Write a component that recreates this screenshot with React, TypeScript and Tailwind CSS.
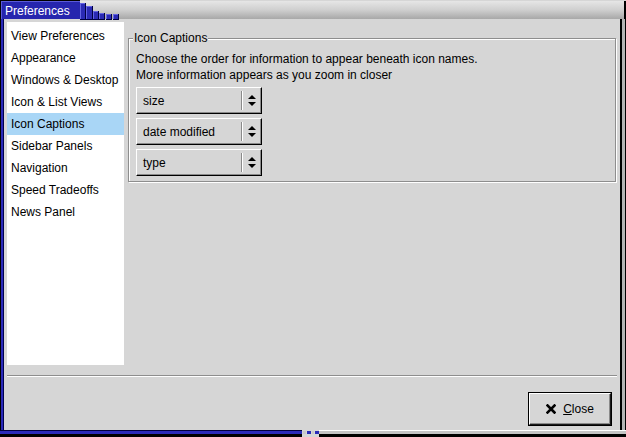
import React from "react";

const items = [
  "View Preferences",
  "Appearance",
  "Windows & Desktop",
  "Icon & List Views",
  "Icon Captions",
  "Sidebar Panels",
  "Navigation",
  "Speed Tradeoffs",
  "News Panel",
];

function Arrows() {
  return (
    <svg width="8" height="13" viewBox="0 0 8 13">
      <polygon points="0,5 4,1 8,5" fill="#000" />
      <polygon points="0,8 4,12 8,8" fill="#000" />
    </svg>
  );
}

function Combo({ label }: { label: string }) {
  return (
    <div className="w-[126px] h-[27px] flex items-center border-t border-l border-t-white border-l-white border-b border-r border-b-black border-r-black shadow-[inset_-1px_-1px_0_#8a8a8a] bg-[#d6d6d6]">
      <div className="flex-1 pl-[6px] leading-[16px]">{label}</div>
      <div className="w-[2px] h-[19px] border-l border-l-[#8a8a8a] border-r border-r-white" />
      <div className="w-[18px] flex items-center justify-center pr-[1px]">
        <Arrows />
      </div>
    </div>
  );
}

function Stairs() {
  const blocks: [number, number, number, number][] = [
    [0, 2, 6, 17],
    [6, 5, 7, 14],
    [13, 10, 6, 9],
    [19, 12, 6, 7],
    [26, 13, 6, 6],
    [33, 13, 6, 6],
  ];
  return (
    <svg width="40" height="19" viewBox="0 0 40 19" className="block">
      {blocks.map(([x, y, w, h], i) => (
        <g key={i}>
          <rect x={x} y={y} width={w} height={h} fill="#000040" />
          <rect x={x} y={y} width={w - 1} height={h - 1} fill="#2a2ab4" />
          <rect x={x} y={y} width={w - 1} height="1" fill="#6464e4" />
          <rect x={x} y={y} width="1" height={h - 1} fill="#6464e4" />
        </g>
      ))}
    </svg>
  );
}

export default function App() {
  return (
    <div className="w-[626px] h-[437px] flex flex-col bg-[#d6d6d6] overflow-hidden text-[12px] text-black font-['Liberation_Sans',Arial,sans-serif]">
      {/* title bar */}
      <div className="h-[19px] flex">
        <div className="w-[80px] bg-[#2626ae] border-l border-t border-black text-white leading-[18px] pl-[4px] pt-[1px] shadow-[inset_1px_1px_0_#5a5ad8]">
          Preferences
        </div>
        <div className="flex-1 flex mt-[1px] bg-gradient-to-b from-[#e6e6e6] via-[#cfcfcf] to-[#a8a8a8] border-r-2 border-r-black">
          <Stairs />
        </div>
      </div>
      {/* body */}
      <div className="flex-1 flex">
        <div className="w-[4px] bg-[#2a2ab8] border-l border-l-black border-r border-r-[#000050]" />
        <div className="flex-1 flex flex-col">
          <div className="flex pt-[3px] pl-[3px] pr-[4px]">
            <div className="w-[117px] h-[343px] bg-white pt-[3px]">
              {items.map((it) => (
                <div
                  key={it}
                  className={
                    "h-[22px] leading-[22px] pl-[4px] " +
                    (it === "Icon Captions" ? "bg-[#a9d6f6]" : "")
                  }
                >
                  {it}
                </div>
              ))}
            </div>
            <div className="flex-1 ml-[4px]">
              <fieldset className="mt-[9px] border border-[#8e8e8e] shadow-[inset_1px_1px_0_#ffffff,1px_1px_0_#ffffff] pl-[4px]">
                <legend className="px-[1px] leading-[14px] bg-[#d6d6d6]">Icon Captions</legend>
                <div className="pt-[6px] pl-[3px] pb-[5px]">
                  <div className="leading-[16px]">
                    Choose the order for information to appear beneath icon names.
                  </div>
                  <div className="leading-[16px]">
                    More information appears as you zoom in closer
                  </div>
                  <div className="mt-[4px] flex flex-col gap-[4px]">
                    <Combo label="size" />
                    <Combo label="date modified" />
                    <Combo label="type" />
                  </div>
                </div>
              </fieldset>
            </div>
          </div>
          <div className="mt-[10px] mx-[3px] h-[2px] border-t border-t-[#8e8e8e] border-b border-b-white" />
          <div className="flex justify-end pr-[8px] mt-[15px]">
            <div className="w-[84px] h-[34px] border border-black">
              <div className="w-full h-full flex items-center justify-center gap-[7px] border-t border-l border-t-white border-l-white border-b border-r border-b-[#1a1a1a] border-r-[#1a1a1a] shadow-[inset_-1px_-1px_0_#8a8a8a]">
                <svg width="10" height="10" viewBox="0 0 10 10">
                  <path d="M1.5 1.5 L8.5 8.5 M8.5 1.5 L1.5 8.5" stroke="#000" strokeWidth="2.6" strokeLinecap="square" />
                </svg>
                <span className="leading-[16px]">
                  <span className="underline">C</span>lose
                </span>
              </div>
            </div>
          </div>
        </div>
        <div className="w-[6px] border-l-2 border-l-black bg-[#b4b4b4] border-r border-r-black" />
      </div>
      {/* bottom border */}
      <div className="h-[7px] flex">
        <div className="w-[302px] bg-[#2a2ab8] border-t border-t-[#000040] border-b-[3px] border-b-black" />
        <div className="w-[17px] flex items-start gap-[1px] pl-[1px] pt-[1px]">
          <div className="w-[3px] h-[3px] bg-[#c8c8c8]" />
          <div className="w-[4px] h-[3px] bg-[#2a2ab8]" />
          <div className="w-[3px] h-[3px] bg-[#c8c8c8]" />
          <div className="w-[4px] h-[3px] bg-[#2a2ab8]" />
        </div>
        <div className="flex-1 bg-[#c4c4c4] border-t border-t-white border-b-[3px] border-b-black" />
      </div>
    </div>
  );
}
